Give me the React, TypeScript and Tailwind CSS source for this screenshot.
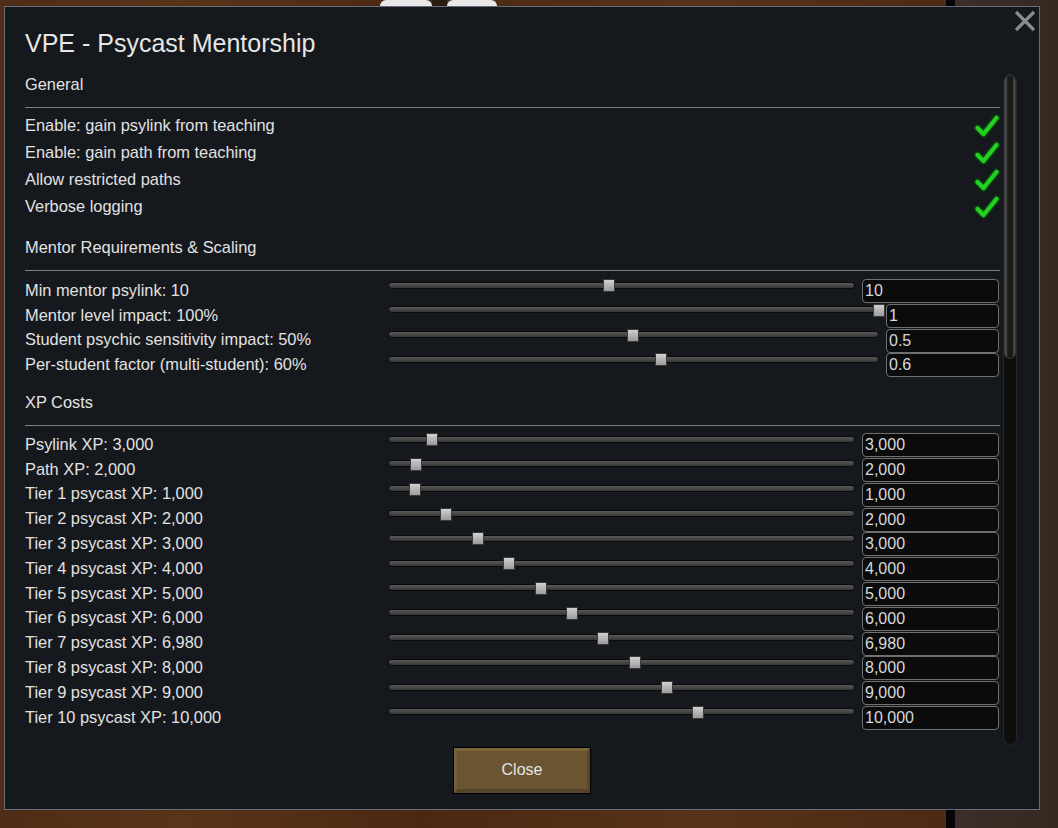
import React from "react";

type SliderRow = {
  label: string;
  value: string;
  pos: number;
  narrow?: boolean;
};

const toggles = [
  "Enable: gain psylink from teaching",
  "Enable: gain path from teaching",
  "Allow restricted paths",
  "Verbose logging",
];

const mentorRows: SliderRow[] = [
  { label: "Min mentor psylink: 10", value: "10", pos: 0.473 },
  { label: "Mentor level impact: 100%", value: "1", pos: 1, narrow: true },
  { label: "Student psychic sensitivity impact: 50%", value: "0.5", pos: 0.498, narrow: true },
  { label: "Per-student factor (multi-student): 60%", value: "0.6", pos: 0.555, narrow: true },
];

const xpRows: SliderRow[] = [
  { label: "Psylink XP: 3,000", value: "3,000", pos: 0.094 },
  { label: "Path XP: 2,000", value: "2,000", pos: 0.06 },
  { label: "Tier 1 psycast XP: 1,000", value: "1,000", pos: 0.058 },
  { label: "Tier 2 psycast XP: 2,000", value: "2,000", pos: 0.124 },
  { label: "Tier 3 psycast XP: 3,000", value: "3,000", pos: 0.193 },
  { label: "Tier 4 psycast XP: 4,000", value: "4,000", pos: 0.259 },
  { label: "Tier 5 psycast XP: 5,000", value: "5,000", pos: 0.328 },
  { label: "Tier 6 psycast XP: 6,000", value: "6,000", pos: 0.394 },
  { label: "Tier 7 psycast XP: 6,980", value: "6,980", pos: 0.46 },
  { label: "Tier 8 psycast XP: 8,000", value: "8,000", pos: 0.529 },
  { label: "Tier 9 psycast XP: 9,000", value: "9,000", pos: 0.597 },
  { label: "Tier 10 psycast XP: 10,000", value: "10,000", pos: 0.664 },
];

function Check() {
  return (
    <svg width="26" height="24" viewBox="0 0 26 24">
      <path
        d="M3.5 14 L9.5 20 L22.5 4"
        fill="none"
        stroke="#0b4a0b"
        strokeWidth="7"
        strokeLinecap="round"
        strokeLinejoin="round"
      />
      <path
        d="M3.5 14 L9.5 20 L22.5 4"
        fill="none"
        stroke="#25d025"
        strokeWidth="4.2"
        strokeLinecap="round"
        strokeLinejoin="round"
      />
    </svg>
  );
}

function Heading({ children, top }: { children: React.ReactNode; top: string }) {
  return (
    <>
      <div className={`flex h-[20px] items-center ${top}`}>{children}</div>
      <div className="mt-[13px] h-px bg-[#7e7f81]" />
    </>
  );
}

function Slider({ row }: { row: SliderRow }) {
  return (
    <div className="flex h-[24.8px]">
      <div className="flex h-[23px] w-[363px] shrink-0 items-center pt-px">{row.label}</div>
      <div className="relative mr-[7px] flex h-[14px] flex-1 items-center">
        <div className="h-[7px] w-full rounded-full border border-[#0a0a0a] bg-[linear-gradient(to_bottom,#5a5a5a_0%,#474747_50%,#363636_100%)]" />
        <div
          className="absolute top-[1px] h-[13px] w-[12px] -translate-x-1/2 border border-[#3a3a3a] bg-[linear-gradient(to_bottom,#d0d0d0,#9a9a9a)]"
          style={{ left: `${row.pos * 100}%` }}
        />
      </div>
      <div
        className={`mr-px mt-px flex h-[24px] shrink-0 items-center rounded-[4px] border border-[#707070] bg-[#0b0b0c] pl-[2px] text-[16px] text-[#d8d8d8] ${
          row.narrow ? "w-[113px]" : "w-[137px]"
        }`}
      >
        {row.value}
      </div>
    </div>
  );
}

export default function App() {
  return (
    <div
      className="relative h-[828px] w-[1058px] overflow-hidden bg-[linear-gradient(to_right,#4e2c15_0px,#5a3419_180px,#4a2812_420px,#583219_700px,#4c2a14_946px,#050505_946px,#050505_955px,#3c2f29_955px,#34281f_1058px)] pt-[6px] pl-[4px] text-[16.4px] text-[#e2e2e2]"
      style={{ fontFamily: '"Liberation Sans", Arial, sans-serif' }}
    >
      <div className="absolute left-[380px] top-0 h-[6px] w-[52px] rounded-t-[20px] bg-[#e8e8e8]" />
      <div className="absolute left-[432px] top-0 h-[6px] w-[15px] bg-[#2a1d12]" />
      <div className="absolute left-[447px] top-0 h-[6px] w-[50px] rounded-t-[20px] bg-[#e8e8e8]" />

      <div className="relative h-[804px] w-[1036px] border border-[#646d79] bg-[#15181c]">
        <button className="absolute right-[3px] top-[3px] h-[22px] w-[22px]" type="button">
          <svg width="22" height="22" viewBox="0 0 22 22">
            <path d="M2 2 L20 20 M20 2 L2 20" stroke="#8a8c8f" strokeWidth="3.2" />
          </svg>
        </button>

        <div className="pl-[20px]">
          <div className="h-[67px] pt-[22px]">
            <div className="flex h-[30px] items-center text-[25px] text-[#e6e6e6]">
              VPE - Psycast Mentorship
            </div>
          </div>

          <div className="flex h-[671px]">
            <div className="w-[975px]">
              <Heading top="mt-0">General</Heading>
              <div className="mt-[4px]">
                {toggles.map((t) => (
                  <div key={t} className="flex h-[27px] items-center justify-between">
                    <span>{t}</span>
                    <Check />
                  </div>
                ))}
              </div>

              <Heading top="mt-[17px]">Mentor Requirements &amp; Scaling</Heading>
              <div className="mt-[7px]">
                {mentorRows.map((r) => (
                  <Slider key={r.label} row={r} />
                ))}
              </div>

              <Heading top="mt-[15px]">XP Costs</Heading>
              <div className="mt-[6px]">
                {xpRows.map((r) => (
                  <Slider key={r.label} row={r} />
                ))}
              </div>
            </div>

            <div className="ml-[3px] flex w-[14px] flex-col rounded-full border border-[#262626] bg-[#0e0e0e]">
              <div className="h-[284px] rounded-full border border-[#333] bg-[linear-gradient(to_right,#5c5c5c,#1c1c1c_30%,#161616_70%,#5c5c5c)]" />
            </div>
          </div>
        </div>

        <div className="mt-[2px] flex justify-center">
          <div className="bg-black p-px">
            <button
              className="flex h-[45px] w-[136px] items-center justify-center border-[3px] border-b-[4px] border-t-[#7d653b] border-l-[#76603a] border-r-[#5a4629] border-b-[#55432a] bg-[#6b5431] text-[16px] text-[#e4e4e4]"
              type="button"
            >
              Close
            </button>
          </div>
        </div>
      </div>
    </div>
  );
}
